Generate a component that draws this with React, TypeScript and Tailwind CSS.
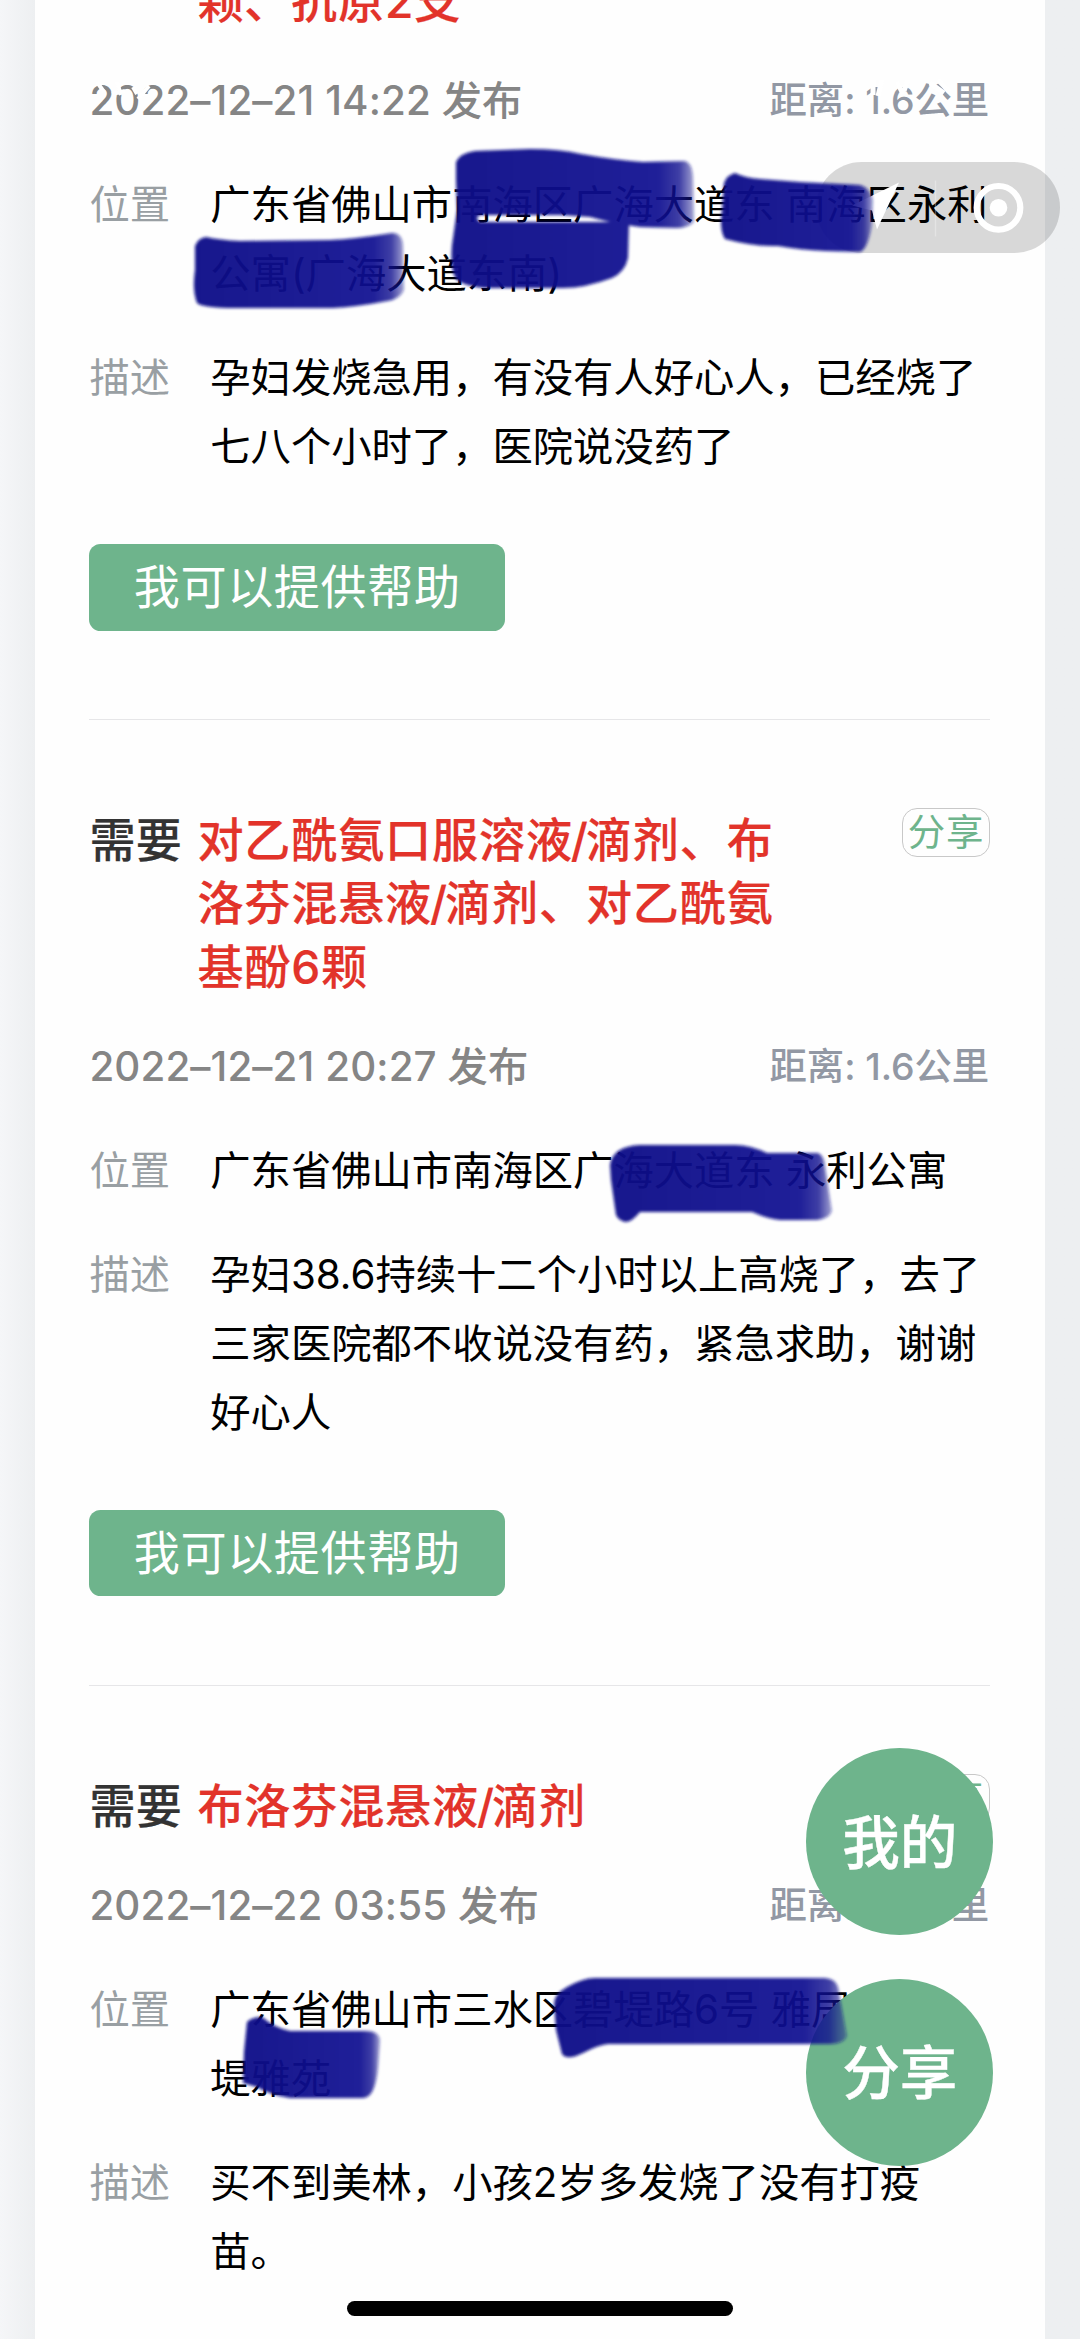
import React from "react";

type Post = {
  need: string[];
  date: string;
  location: string[];
  description: string[];
};

const posts: Post[] = [
  {
    need: ["颗、抗原2支"],
    date: "2022–12–21 14:22 发布",
    location: ["广东省佛山市南海区广海大道东 南海区永利", "公寓(广海大道东南)"],
    description: ["孕妇发烧急用，有没有人好心人，已经烧了", "七八个小时了，医院说没药了"],
  },
  {
    need: ["对乙酰氨口服溶液/滴剂、布", "洛芬混悬液/滴剂、对乙酰氨", "基酚6颗"],
    date: "2022–12–21 20:27 发布",
    location: ["广东省佛山市南海区广海大道东 永利公寓"],
    description: ["孕妇38.6持续十二个小时以上高烧了，去了", "三家医院都不收说没有药，紧急求助，谢谢", "好心人"],
  },
  {
    need: ["布洛芬混悬液/滴剂"],
    date: "2022–12–22 03:55 发布",
    location: ["广东省佛山市三水区碧堤路6号 雅居乐", "堤雅苑"],
    description: ["买不到美林，小孩2岁多发烧了没有打疫", "苗。"],
  },
];

/* Slashes are kerned tightly against the neighbouring characters. */
function TightSlashes({ text }: { text: string }) {
  const [head, tail] = text.split("/");
  if (tail === undefined) return <>{text}</>;
  return (
    <>
      {head}
      <span className="-ml-[2px] tracking-[-2px]">/</span>
      {tail}
    </>
  );
}

function Lines({ lines }: { lines: string[] }) {
  return (
    <div>
      {lines.map((line) => (
        <p key={line} className="whitespace-nowrap">
          <TightSlashes text={line} />
        </p>
      ))}
    </div>
  );
}

function Field({ label, lines }: { label: string; lines: string[] }) {
  return (
    <div className="flex text-[40.32px] leading-[69.2px]">
      <span className="w-[120.9px] shrink-0 text-[#999fa3]">{label}</span>
      <div className="text-black"><Lines lines={lines} /></div>
    </div>
  );
}

function PostCard({ post, last }: { post: Post; last: boolean }) {
  return (
    <article>
      <header className="flex items-start text-[46.08px] leading-[63.4px] font-medium [-webkit-text-stroke-width:0.2px]">
        <span className="w-[108px] shrink-0 translate-y-[1px] whitespace-nowrap tracking-[0.4px] text-[#333]">需要</span>
        <div className="flex-1 translate-y-[1px] tracking-[0.85px] text-[#e2332a]"><Lines lines={post.need} /></div>
        <button className="h-[49px] w-[88px] shrink-0 rounded-[15px] border-[1.5px] border-[#c8c8c8] text-[37.44px] leading-[45px] font-normal tracking-[1px] whitespace-nowrap text-[#6eb48c] [-webkit-text-stroke-width:0]">
          分享
        </button>
      </header>
      <div className="mt-[33.8px] flex items-center justify-between leading-[69.2px]">
        <time className="text-[40.32px] font-medium tracking-[0.1px] text-[#858585]">{post.date}</time>
        <span className="mr-[1px] text-[37.44px] font-medium tracking-[-0.1px] text-[#9298a4]">距离: 1.6公里</span>
      </div>
      <div className="mt-[34.6px] flex flex-col gap-[34.6px]">
        <Field label="位置" lines={post.location} />
        <Field label="描述" lines={post.description} />
      </div>
      <button className="mt-[62.8px] block h-[86.4px] w-[415.6px] rounded-[11.5px] bg-[#6eb48c] text-[46.08px] leading-[87px] tracking-[0.6px] text-white">
        我可以提供帮助
      </button>
      {!last && <hr className="mt-[88.9px] mb-[87.5px] border-t-[1.5px] border-[#e6e6e8]" />}
    </article>
  );
}

function FloatingButton({ children }: { children: string }) {
  return (
    <button className="size-[187.2px] rounded-full bg-[#6eb48c] pt-[3px] text-[57.6px] font-medium text-white [-webkit-text-stroke-width:0.4px]">
      {children}
    </button>
  );
}

const inkStrokes = [
  "M456 162 Q460 153 475 151 L530 149 Q560 149 581 154 Q615 160 643 162 L685 161 Q692 163 693 176 L694 222 Q688 228 676 228 L640 227 Q615 224 590 217 L560 215 L480 215 Q474 218 480 222 L629 222 L628 258 Q625 272 612 278 Q585 288 563 288 L485 288 Q463 286 456 279 Q450 270 452 245 L457 210 L456 180Z",
  "M195 246 Q198 238 206 237 Q220 240 240 241 L330 240 Q355 239 392 233 Q402 233 403 245 L404 290 Q400 299 388 301 Q355 307 333 308 L235 308 Q203 308 197 303 Q192 290 195 270Z",
  "M724 183 Q727 175 735 173 Q745 178 760 179 L800 182 L860 185 Q871 188 873 200 L872 225 Q868 249 860 252 L825 251 Q800 250 778 246 Q755 247 725 239 Q719 230 722 210Z",
  "M610 1165 Q613 1146 640 1145 L735 1145 Q750 1145 767 1153 L818 1153 Q824 1155 825 1167 L832 1211 Q829 1219 817 1220 L780 1220 Q768 1219 752 1212 L640 1212 Q632 1222 625 1222 Q618 1220 616 1215 L611 1180Z",
  "M554 2004 Q554 1994 567 1987 Q583 1978 595 1978 L825 1978 Q836 1979 838 1987 L847 2036 Q844 2044 830 2044 L608 2044 Q598 2045 583 2053 Q567 2061 562 2054 L556 2030Z",
  "M247 2022 Q252 2017 262 2017 Q275 2028 290 2031 L365 2031 Q380 2031 380 2041 L378 2068 Q375 2098 363 2098 L290 2098 Q270 2095 257 2087 L243 2083 L244 2052Z",
];

function InkOverlay() {
  return (
    <svg className="pointer-events-none absolute inset-0" width="1080" height="2339" viewBox="0 0 1080 2339">
      <defs>
        <filter id="soft" x="-5%" y="-5%" width="110%" height="110%">
          <feGaussianBlur stdDeviation="1.7" />
        </filter>
        <linearGradient id="ink">
          <stop offset="0" stopColor="#0c0e88" stopOpacity="0.96" />
          <stop offset="0.85" stopColor="#0e1090" stopOpacity="0.93" />
          <stop offset="0.94" stopColor="#10128f" stopOpacity="0.8" />
          <stop offset="1" stopColor="#10128f" stopOpacity="0.4" />
        </linearGradient>
      </defs>
      {inkStrokes.map((d) => (
        <path key={d} d={d} fill="url(#ink)" filter="url(#soft)" />
      ))}
    </svg>
  );
}

/* White status bar glyph remnants that cross the first row. */
function StatusMarks() {
  return (
    <svg className="absolute top-[60px] left-0" width="1080" height="60" viewBox="0 60 1080 60" fill="none" stroke="#fff">
      <path d="M97 82 L104 92 M112 94 L125 91 M117 82 L121 95 M133 87 L137 94 M138 99 L149 86" strokeWidth="4" />
      <path d="M873 80 V95 M882 80 L878 96 M897 82 L903 94 M908 80 L904 91 M930 83 L944 93 M938 80 L950 92" strokeWidth="5" />
    </svg>
  );
}

function MiniCapsule() {
  return (
    <div className="absolute top-[161.5px] left-[816px] h-[91.5px] w-[244px] rounded-full bg-black/15">
      <svg width="244" height="91.5" viewBox="816 161.5 244 91.5">
        <path d="M899 182 L877 229 L872 210 L852 205Z" fill="#fff" />
        <path d="M935.5 180 V236" stroke="#fff" strokeOpacity="0.3" strokeWidth="1.4" />
        <circle cx="998.5" cy="207.3" r="21.8" fill="none" stroke="#fff" strokeWidth="6.2" />
        <circle cx="998.5" cy="207.3" r="8.8" fill="#fff" />
      </svg>
    </div>
  );
}

export default function App() {
  return (
    <div
      lang="zh-CN"
      className="relative h-[2339px] w-[1080px] overflow-hidden bg-[#eff1f4] font-['Inter','Noto_Sans_CJK_SC',sans-serif]"
    >
      <div className="h-full bg-linear-to-r from-[#f5f6f8] to-[#edeff1] to-[35px] pl-[34.6px]">
        <main className="flow-root h-full w-[1010.5px] bg-[#fefefe] pr-[55px] pl-[54.8px]">
          {posts.map((post, i) => (
            <div key={post.date} className={i === 0 ? "-mt-[31px] [&_header>button]:invisible [&_header>span]:invisible" : ""}>
              <PostCard post={post} last={i === posts.length - 1} />
            </div>
          ))}
        </main>
      </div>
      <StatusMarks />
      <MiniCapsule />
      <div className="absolute top-[1748px] left-[806.2px] flex flex-col gap-[43.4px]">
        <FloatingButton>我的</FloatingButton>
        <FloatingButton>分享</FloatingButton>
      </div>
      <InkOverlay />
      <div className="absolute top-[2301px] left-[347px] h-[15px] w-[386px] rounded-full bg-black" />
    </div>
  );
}
